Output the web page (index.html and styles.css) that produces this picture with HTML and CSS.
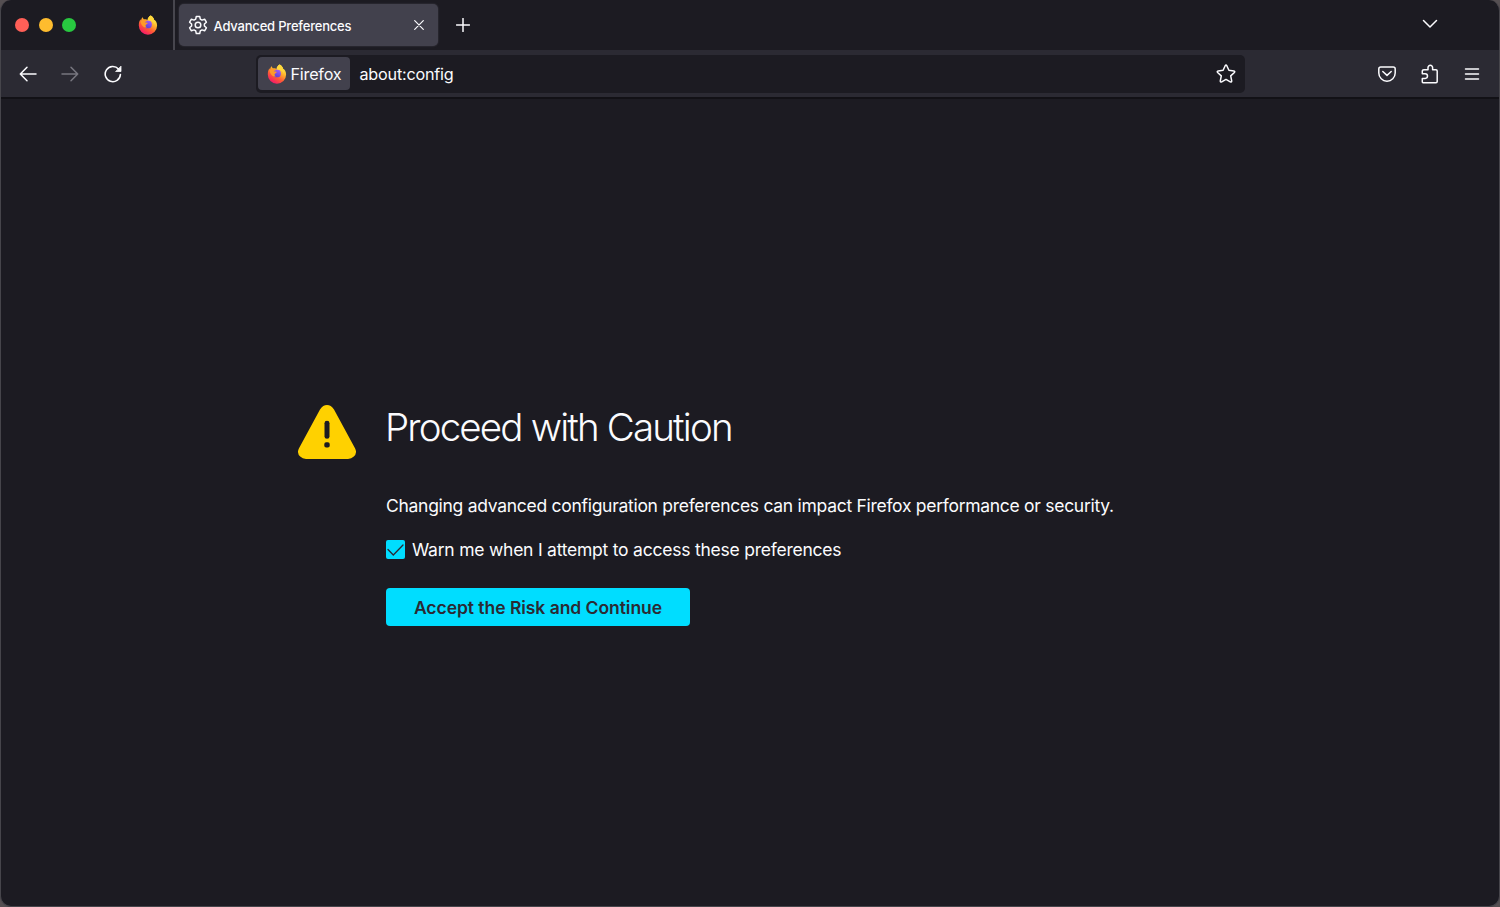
FILE: index.html
```html
<!DOCTYPE html>
<html lang="en">
<head>
<meta charset="utf-8">
<title>Advanced Preferences</title>
<link rel="stylesheet" href="styles.css">
</head>
<body>
<svg class="defs" width="0" height="0" aria-hidden="true">
  <defs>
    <linearGradient id="flame" x1=".85" y1=".1" x2=".3" y2="1">
      <stop offset="0" stop-color="#fff14f"/><stop offset=".35" stop-color="#ffb32c"/><stop offset=".65" stop-color="#ff5a36"/><stop offset="1" stop-color="#f5156c"/>
    </linearGradient>
    <linearGradient id="globe" x1=".8" y1="0" x2=".3" y2="1">
      <stop offset="0" stop-color="#a45cff"/><stop offset="1" stop-color="#5b3fd0"/>
    </linearGradient>
    <symbol id="firefox" viewBox="0 0 20 20">
      <path fill="url(#flame)" d="M12.600.4c2 1 3.200 2.700 3.500 4.300 1.700.8 3 2.900 3 5.800A9.100 9.100 0 0 1 .8 10.500C.8 8 1.500 5.500 2.500 4.300l.5 1.400C3.300 4 3.900 3 4.800 2.300c.1 1 .5 1.700 1.200 2.100 1.400-.3 2.700 0 3.700.5C9.600 3 11 1.300 12.600.4z"/>
      <circle cx="10" cy="9.400" r="3.900" fill="url(#globe)"/>
      <path fill="#ff9a28" d="M2.600 6.500c1.500-1.800 4-2.300 6.500-1.300-.3 1-1 1.500-2.400 1.800 1 .7 2.400.6 3.200 1-.3 1-1.600 1.200-2.200 1.900-.4 1 .2 2 1.300 2.500-2.500.6-5.600-1-6.400-5.900z"/>
      <path fill="#ffd83c" d="M12.600.4c2 1 3.200 2.700 3.500 4.300 1 1.500 1.300 3.300 1 5-.6-1.500-1.500-2.500-3-3.300-1.700-.7-3.600-.9-4.400-1.500C9.600 3 11 1.300 12.600.4z"/>
    </symbol>
  </defs>
</svg>
<div class="window">
  <header class="tabbar">
    <div class="lights"><i class="light red"></i><i class="light yellow"></i><i class="light green"></i></div>
    <div class="pinned"><svg class="logo" width="20" height="20"><use href="#firefox"/></svg></div>
    <div class="tab">
      <svg class="line" width="20" height="20" viewBox="0 0 20 20" stroke-width="1.500"><path d="M8.300 1.400h3.400l.6 2.700 1.700 1 2.600-.9 1.800 3-2 1.800v2l2 1.800-1.800 3-2.600-.9-1.700 1-.6 2.700H8.300l-.6-2.700-1.700-1-2.600.9-1.800-3 2-1.800V9l-2-1.800 1.800-3 2.600.9 1.700-1z"/><circle cx="10" cy="10" r="2.800"/></svg>
      <span class="tab-title">Advanced Preferences</span>
      <svg class="line close" width="10" height="10" viewBox="0 0 10 10" stroke-width="1.200"><path d="M.7.7l8.600 8.600M9.300.7L.7 9.300"/></svg>
    </div>
    <svg class="line plus" width="14" height="14" viewBox="0 0 14 14" stroke-width="1.500"><path d="M7 .5v13M.5 7h13"/></svg>
    <svg class="line chevron" width="16" height="10" viewBox="0 0 16 10" stroke-width="1.500"><path d="M1.500 1.500L8 8l6.500-6.500"/></svg>
  </header>
  <nav class="toolbar">
    <div class="history">
      <svg class="line" width="18" height="16" viewBox="0 0 18 16" stroke-width="1.500"><path d="M17 8H1.500M8 1.300L1.300 8 8 14.700"/></svg>
      <svg class="line dim" width="18" height="16" viewBox="0 0 18 16" stroke-width="1.500"><path d="M1 8h15.500M10 1.300L16.700 8 10 14.700"/></svg>
      <svg class="line reload" width="18" height="18" viewBox="0 0 18 18" stroke-width="1.600"><path d="M16.400 9.500A7.600 7.600 0 1 1 14.500 4"/><path fill="currentColor" stroke-width=".8" d="M17 1.500v5h-5z"/></svg>
    </div>
    <div class="urlbar">
      <div class="identity"><svg class="logo" width="20" height="20"><use href="#firefox"/></svg><span class="brand">Firefox</span></div>
      <span class="url">about:config</span>
      <svg class="line star" width="20" height="20" viewBox="0 0 20 20" stroke-width="1.500"><path d="M9.200 1.700q.8-1.300 1.600 0l2.100 4.600 5 .6q1.400.4.5 1.600l-3.700 3.400 1 5q0 1.500-1.400 1L10 15.400l-4.300 2.500q-1.400.5-1.400-1l1-5L1.600 8.500q-.9-1.200.5-1.600l5-.6z"/></svg>
    </div>
    <div class="actions">
      <svg class="line" width="18" height="16" viewBox="0 0 18 16" stroke-width="1.500"><path d="M2.800.9h12.400q2 0 2 2V7A8.200 8.200 0 0 1 .8 7V2.900q0-2 2-2z"/><path d="M4.800 5.500L9 9.400l4.200-3.900"/></svg>
      <svg class="line" width="18" height="20" viewBox="0 0 18 20" stroke-width="1.500"><path d="M2 18.700h13q1.200 0 1.200-1.200V7q0-1.200-1.200-1.200h-3.400V3.600a2.300 2.300 0 0 0-4.600 0v2.200H3Q1.300 5.800 1.300 7.300v2.500h2.900a2.300 2.300 0 0 1 0 4.600H1.300v3.600q0 .7.7.7z"/></svg>
      <svg class="line" width="16" height="14" viewBox="0 0 16 14" stroke-width="1.500"><path d="M1.500 2h13M1.500 7h13M1.500 12h13"/></svg>
    </div>
  </nav>
  <main class="page">
    <svg class="warning" width="58" height="54" viewBox="0 0 58 55" preserveAspectRatio="none"><path fill="#ffd100" d="M22 4.500Q25 0 29 0t7 4.500L57 44q2.500 5-1.200 8.500Q53.500 55 50 55H8q-3.500 0-5.800-2.500Q-1.500 49 1 44z"/><path stroke="#1c1b22" stroke-width="5" stroke-linecap="round" d="M29 18.500V32"/><rect x="26.300" y="38" width="5.400" height="5.200" rx="1.800" fill="#1c1b22"/></svg>
    <section class="notice">
      <h1 class="heading">Proceed with Caution</h1>
      <p class="description">Changing advanced configuration preferences can impact Firefox performance or security.</p>
      <label class="choice"><svg width="19" height="19" viewBox="0 0 19 19"><rect width="19" height="19" rx="2" fill="#00ddff"/><path fill="none" stroke="#2b2a33" stroke-width="1.300" stroke-linecap="round" d="M2 9.500L7.300 15 17 5"/></svg><span>Warn me when I attempt to access these preferences</span></label>
      <button class="accept">Accept the Risk and Continue</button>
    </section>
  </main>
</div>
</body>
</html>
```
FILE: styles.css
```css
* { box-sizing: border-box; }
body { margin: 0; background: #554f52; font-family: Inter, "Liberation Sans", sans-serif; color: #fbfbfe; }
.defs { position: absolute; }
svg { display: block; flex: none; }
.line { fill: none; stroke: currentColor; stroke-linecap: round; stroke-linejoin: round; }
.logo { overflow: visible; }
.window { width: 1500px; height: 907px; border: 1px solid #46454b; border-top: 0; border-radius: 11px; background: #1c1b22; overflow: hidden; display: flex; flex-direction: column; white-space: nowrap; }

.tabbar { height: 50px; flex: none; display: flex; align-items: center; }
.lights { display: flex; gap: 9.500px; padding-left: 14px; width: 137px; }
.light { width: 14px; height: 14px; border-radius: 50%; }
.red { background: #ff5f57; }
.yellow { background: #febc2e; }
.green { background: #28c840; }
.pinned { width: 37px; height: 50px; padding-top: 15px; border-right: 2px solid #47464e; }
.tab { width: 259px; height: 42px; margin: -1px 0 0 4px; padding: 0 14px 0 9px; border-radius: 5px; background: #42414d; box-shadow: 0 0 2px rgba(128,128,142,.4); display: flex; align-items: center; }
.tab-title { margin: 2px 0 0 5.500px; font-size: 13px; font-weight: 500; letter-spacing: -.2px; }
.close { margin-left: auto; }
.plus { margin: 0 0 0 18px; }
.chevron { margin: 0 61.500px 2px auto; }

.toolbar { height: 49px; flex: none; display: flex; align-items: center; background: #2b2a33; border-bottom: 2px solid #121116; }
.history { width: 255px; padding: 1px 0 0 18px; display: flex; align-items: center; gap: 24.200px; }
.reload { margin-left: .6px; }
.dim { color: #77767f; }
.urlbar { width: 989px; height: 38px; padding: 0 9px 0 2px; border-radius: 5px; background: #1c1b22; display: flex; align-items: center; }
.identity { width: 92px; height: 33px; padding-left: 9px; border-radius: 4px; background: #42414d; display: flex; align-items: center; gap: 3.500px; }
.brand, .url { font-size: 16.200px; letter-spacing: -.22px; padding-top: 1px; }
.url { margin-left: 9.500px; }
.star { margin-left: auto; }
.actions { margin-left: 133px; display: flex; align-items: center; gap: 25px; }

.page { padding: 306px 0 0 297px; display: flex; align-items: flex-start; gap: 30px; }
.notice { display: flex; flex-direction: column; align-items: flex-start; }
.heading { margin: -1px 0 0 -1px; height: 46px; line-height: 46px; font-size: 38.500px; font-weight: 300; letter-spacing: -1.840px; }
.description { margin: 44px 0 0; height: 24px; line-height: 24px; font-size: 17.500px; letter-spacing: -.285px; }
.choice { margin-top: 19px; height: 24px; display: flex; align-items: center; gap: 7px; font-size: 17.500px; letter-spacing: -.23px; }
.accept { margin-top: 27px; width: 304px; height: 38px; padding: 0; border: 0; border-radius: 4px; background: #00ddff; color: #2b2a33; font: 600 17.500px Inter, "Liberation Sans", sans-serif; letter-spacing: -.04px; }
```
